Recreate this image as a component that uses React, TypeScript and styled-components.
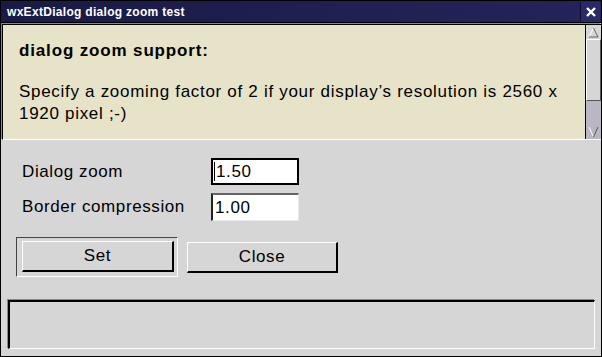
import React from "react";
import styled, { createGlobalStyle } from "styled-components";

const Global = createGlobalStyle`
  html, body { margin: 0; padding: 0; background: #d6d6d6; }
  body { font-family: "Liberation Sans", Arial, sans-serif; }
`;

const Window = styled.div`
  box-sizing: border-box;
  width: 602px;
  height: 357px;
  border: 1px solid #000;
  background: #d6d6d6;
  display: flex;
  flex-direction: column;
  overflow: hidden;
`;

const TitleBar = styled.div`
  height: 21px;
  display: flex;
  align-items: center;
  background: linear-gradient(90deg, #1a1a46 0%, #202052 60%, #24245a 100%);
  border-bottom: 1px solid #000;
`;

const TitleText = styled.div`
  flex: 1;
  padding-left: 6px;
  color: #fff;
  font: bold 12px "Liberation Sans", Arial, sans-serif;
  letter-spacing: 0.3px;
`;

const CloseBox = styled.div`
  width: 19px;
  height: 20px;
  margin-right: 1px;
  background: #2a2a68;
  border-left: 1px solid #0c0c30;
  display: flex;
  align-items: center;
  justify-content: center;
`;

const InfoPane = styled.div`
  height: 114px;
  display: flex;
  margin: 1px 0 0 1px;
  border-top: 1px solid #000;
  border-left: 1px solid #000;
  box-shadow: -1px -1px 0 #8a8a8a;
  border-bottom: 1px solid #fff;
`;

const InfoText = styled.div`
  flex: 1;
  background: #e6e3c8;
  padding: 15px 0 0 16px;
  font-size: 17px;
  letter-spacing: 0.7px;
  color: #000;
  line-height: 22px;
`;

const Heading = styled.div`
  font-weight: bold;
  letter-spacing: 0.85px;
  margin-bottom: 19px;
`;

const ScrollBar = styled.div`
  width: 15px;
  display: flex;
  flex-direction: column;
  background: #bab6c4;
  border-left: 1px solid #000;
`;

const ArrowBtn = styled.div<{ $trough?: boolean }>`
  height: 14px;
  background: ${(p) => (p.$trough ? "#bab6c4" : "#d6d6d6")};
  display: flex;
  align-items: center;
  justify-content: center;
`;

const Thumb = styled.div`
  height: 62px;
  box-sizing: border-box;
  background: #d6d6d6;
  border-top: 1px solid #fff;
  border-left: 1px solid #fff;
  border-bottom: 1px solid #555;
  border-right: 1px solid #555;
`;

const Trough = styled.div`
  flex: 1;
`;

const Form = styled.div`
  display: grid;
  grid-template-columns: 189px 88px;
  row-gap: 8px;
  padding: 18px 0 0 21px;
  align-items: center;
`;

const Label = styled.div`
  font-size: 17px;
  letter-spacing: 0.6px;
  color: #000;
`;

const Field = styled.div<{ $focused?: boolean }>`
  box-sizing: border-box;
  height: ${(p) => (p.$focused ? 27 : 28)}px;
  background: #fff;
  font-size: 17px;
  letter-spacing: 0.6px;
  color: #000;
  display: flex;
  align-items: center;
  padding-left: 2px;
  border: 1px solid #000;
  ${(p) =>
    p.$focused
      ? `box-shadow: inset 0 0 0 1px #000;`
      : `border-color: #000 #e8e8e8 #e8e8e8 #000; border-top: 2px solid #666; border-left: 2px solid #222;`}
`;

const Caret = styled.span`
  display: inline-block;
  width: 1px;
  height: 19px;
  background: #000;
  margin-right: 1px;
`;

const Buttons = styled.div`
  display: flex;
  align-items: center;
  gap: 9px;
  padding: 16px 0 0 15px;
`;

const FocusFrame = styled.div`
  box-sizing: border-box;
  padding: 3px 3px 4px 5px;
  border-top: 1px solid #444;
  border-left: 1px solid #444;
  border-right: 1px solid #fff;
  border-bottom: 1px solid #fff;
`;

const Button = styled.div<{ $w: number }>`
  box-sizing: border-box;
  width: ${(p) => p.$w}px;
  height: 31px;
  display: flex;
  align-items: center;
  justify-content: center;
  font-size: 17px;
  letter-spacing: 0.6px;
  color: #000;
  background: #d6d6d6;
  border-top: 1px solid #fff;
  border-left: 1px solid #fff;
  border-right: 2px solid #000;
  border-bottom: 2px solid #000;
`;

const StatusPanel = styled.div`
  box-sizing: border-box;
  margin: 23px 6px 0 7px;
  height: 49px;
  border-top: 2px solid #000;
  border-left: 2px solid #000;
  border-right: 1px solid #fff;
  border-bottom: 1px solid #fff;
  box-shadow: -1px -1px 0 #888;
`;

const Up = () => (
  <svg width="11" height="11" viewBox="0 0 11 11">
    <polyline points="1,10 5.5,1 10,10 1,10" fill="none" stroke="#fff" strokeWidth="1" />
    <polyline points="1,10 10,10 5.5,1" fill="none" stroke="#555" strokeWidth="1" />
  </svg>
);

const Down = () => (
  <svg width="11" height="12" viewBox="0 0 11 12">
    <polyline points="1,1 5.5,11 10,1" fill="none" stroke="#fff" strokeWidth="1" />
    <polyline points="5.5,11 10,1" fill="none" stroke="#444" strokeWidth="1" />
  </svg>
);

export default function App() {
  return (
    <>
      <Global />
      <Window>
        <TitleBar>
          <TitleText>wxExtDialog dialog zoom test</TitleText>
          <CloseBox>
            <svg width="12" height="12" viewBox="0 0 12 12">
              <path d="M2 2 L10 10 M10 2 L2 10" stroke="#fff" strokeWidth="2.4" />
            </svg>
          </CloseBox>
        </TitleBar>
        <InfoPane>
          <InfoText>
            <Heading>dialog zoom support:</Heading>
            Specify a zooming factor of 2 if your display’s resolution is 2560 x
            <br />
            1920 pixel ;-)
          </InfoText>
          <ScrollBar>
            <ArrowBtn>
              <Up />
            </ArrowBtn>
            <Thumb />
            <Trough />
            <ArrowBtn $trough>
              <Down />
            </ArrowBtn>
          </ScrollBar>
        </InfoPane>
        <Form>
          <Label>Dialog zoom</Label>
          <Field $focused>
            <Caret />
            1.50
          </Field>
          <Label>Border compression</Label>
          <Field>1.00</Field>
        </Form>
        <Buttons>
          <FocusFrame>
            <Button $w={152}>Set</Button>
          </FocusFrame>
          <Button $w={151}>Close</Button>
        </Buttons>
        <StatusPanel />
      </Window>
    </>
  );
}
